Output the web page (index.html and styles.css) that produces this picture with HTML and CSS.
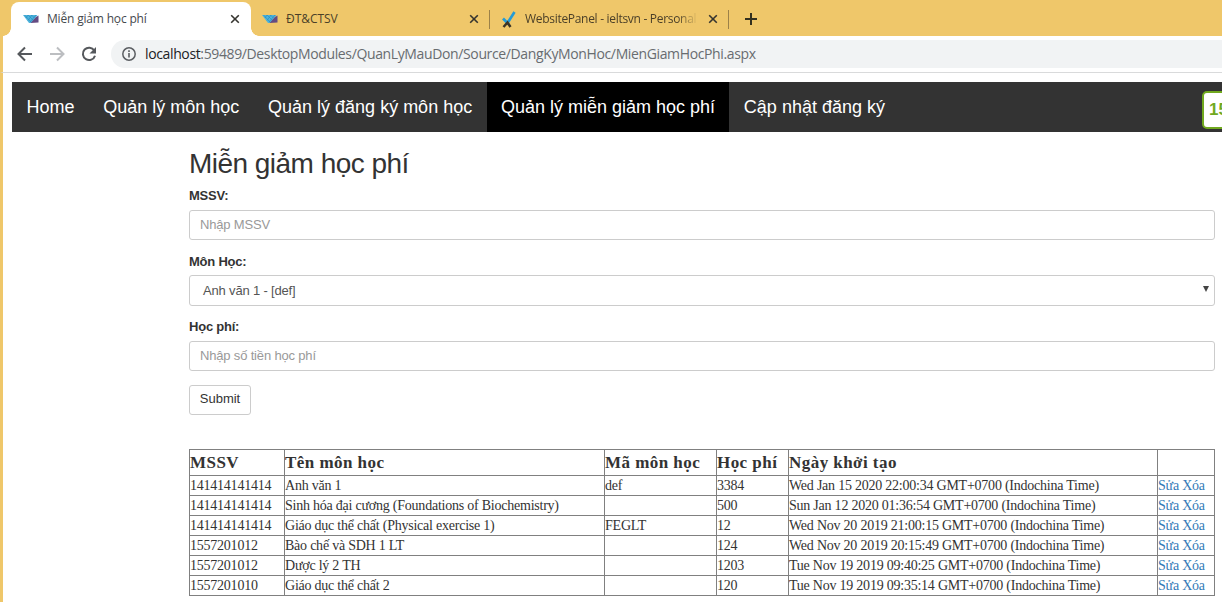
FILE: index.html
```html
<!DOCTYPE html>
<html lang="vi">
<head>
<meta charset="utf-8">
<title>Miễn giảm học phí</title>
<link rel="stylesheet" href="styles.css">
</head>
<body>
<svg class="defs" width="0" height="0">
  <defs>
    <symbol id="logo" viewBox="0 0 16 10"><path d="M0 1h14.500L8.500 9H6z" fill="#4fb4dc"/><path d="m1.500 1 6.500 7M5 1l5 5M8.500 1l3 3M5 1 3 4M9 1 5 6.500M13 1 7 8" fill="none" stroke="#2389bd" stroke-width=".6"/><path d="M7.500 9 13 3l2.500-1.500V8.500z" fill="#654b82"/></symbol>
    <symbol id="close" viewBox="0 0 10 10"><path d="m1.200 1.200 7.600 7.600M8.800 1.200 1.200 8.800" fill="none" stroke="currentColor" stroke-width="1.600"/></symbol>
  </defs>
</svg>
<div class="browser">
  <div class="tabs">
    <div class="tab active"><svg class="fav"><use href="#logo"/></svg><span class="title t1">Miễn giảm học phí</span><svg class="close"><use href="#close"/></svg></div>
    <div class="tab"><svg class="fav"><use href="#logo"/></svg><span class="title t2">ĐT&amp;CTSV</span><svg class="close"><use href="#close"/></svg></div>
    <div class="tab"><svg class="fav check" viewBox="0 0 16 18"><path d="M2 8.500 6.500 13 13.500 2" fill="none" stroke="#249bd7" stroke-width="2.700"/><path d="m2.500 17 4-4.500L9.500 17" fill="none" stroke="#3d3426" stroke-width="2.500"/></svg><span class="title t3">WebsitePanel - ieltsvn - Personal</span><svg class="close"><use href="#close"/></svg></div>
    <svg class="plus" viewBox="0 0 12 12"><path d="M6 0v12M0 6h12" stroke="#33301f" stroke-width="2"/></svg>
  </div>
  <div class="toolbar">
    <svg class="nav-icon" viewBox="0 0 16 16"><path d="M15 8H2M8 1.500 1.500 8 8 14.500" fill="none" stroke="#55585c" stroke-width="2"/></svg>
    <svg class="nav-icon" viewBox="0 0 16 16"><path d="M1 8h13M8 1.500 14.500 8 8 14.500" fill="none" stroke="#bcbec1" stroke-width="2"/></svg>
    <svg class="nav-icon" viewBox="0 0 16 16"><path d="M13.300 4.500A6.200 6.200 0 1 0 14 9.700" fill="none" stroke="#55585c" stroke-width="2"/><path d="M15 1v6.500H8.500z" fill="#55585c"/></svg>
    <div class="address">
      <svg class="info" viewBox="0 0 14 14"><circle cx="7" cy="7" r="6.200" fill="none" stroke="#5b5e62" stroke-width="1.500"/><path d="M7 6v4.500M7 3.300V5" stroke="#5b5e62" stroke-width="1.600"/></svg>
      <span class="url"><b>localhost</b>:59489/DesktopModules/QuanLyMauDon/Source/DangKyMonHoc/MienGiamHocPhi.aspx</span>
    </div>
  </div>
  <div class="page">
    <nav class="menu">
      <a>Home</a><a>Quản lý môn học</a><a>Quản lý đăng ký môn học</a><a class="current">Quản lý miễn giảm học phí</a><a>Cập nhật đăng ký</a>
      <div class="badge">15</div>
    </nav>
    <main class="content">
      <h2>Miễn giảm học phí</h2>
      <label>MSSV:</label>
      <div class="field"><span class="hint">Nhập MSSV</span></div>
      <label class="subject">Môn Học:</label>
      <div class="field select"><span>Anh văn 1 - [def]</span><svg class="arrow" viewBox="0 0 6 6"><path d="M0 0h6L3 6z" fill="#444"/></svg></div>
      <label>Học phí:</label>
      <div class="field"><span class="hint">Nhập số tiền học phí</span></div>
      <button type="button">Submit</button>
      <table>
        <colgroup><col class="c1"><col class="c2"><col class="c3"><col class="c4"><col class="c5"><col class="c6"></colgroup>
        <thead><tr><th>MSSV</th><th>Tên môn học</th><th>Mã môn học</th><th>Học phí</th><th>Ngày khởi tạo</th><th></th></tr></thead>
        <tbody>
        <tr><td>141414141414</td><td>Anh văn 1</td><td>def</td><td>3384</td><td>Wed Jan 15 2020 22:00:34 GMT+0700 (Indochina Time)</td><td><a>Sửa</a> <a>Xóa</a></td></tr>
        <tr><td>141414141414</td><td>Sinh hóa đại cương (Foundations of Biochemistry)</td><td></td><td>500</td><td>Sun Jan 12 2020 01:36:54 GMT+0700 (Indochina Time)</td><td><a>Sửa</a> <a>Xóa</a></td></tr>
        <tr><td>141414141414</td><td>Giáo dục thể chất (Physical exercise 1)</td><td>FEGLT</td><td>12</td><td>Wed Nov 20 2019 21:00:15 GMT+0700 (Indochina Time)</td><td><a>Sửa</a> <a>Xóa</a></td></tr>
        <tr><td>1557201012</td><td>Bào chế và SDH 1 LT</td><td></td><td>124</td><td>Wed Nov 20 2019 20:15:49 GMT+0700 (Indochina Time)</td><td><a>Sửa</a> <a>Xóa</a></td></tr>
        <tr><td>1557201012</td><td>Dược lý 2 TH</td><td></td><td>1203</td><td>Tue Nov 19 2019 09:40:25 GMT+0700 (Indochina Time)</td><td><a>Sửa</a> <a>Xóa</a></td></tr>
        <tr><td>1557201010</td><td>Giáo dục thể chất 2</td><td></td><td>120</td><td>Tue Nov 19 2019 09:35:14 GMT+0700 (Indochina Time)</td><td><a>Sửa</a> <a>Xóa</a></td></tr>
        </tbody>
      </table>
    </main>
  </div>
</div>
</body>
</html>
```
FILE: styles.css
```css
* { box-sizing: border-box; }
body { margin: 0; width: 1222px; height: 602px; overflow: hidden; background: #fff; color: #333; font-family: "Liberation Sans", Arial, sans-serif; }
.defs { position: absolute; }
svg { display: block; flex: none; }
.browser { height: 602px; overflow: hidden; }
.tabs { height: 36px; padding-left: 11px; background: #efc76a; display: flex; align-items: flex-end; }
.tab { width: 239px; height: 34px; padding: 0 11px 0 11px; display: flex; align-items: center; position: relative; color: #4a3f28; }
.tab + .tab::after { content: ""; position: absolute; right: 0; top: 8px; width: 1px; height: 19px; background: #9c8148; }
.tab.active { width: 240px; padding-left: 12px; background: #fff; border-radius: 8px 8px 0 0; color: #45494d; }
.tab.active::before, .tab.active::after { content: ""; position: absolute; bottom: 0; width: 8px; height: 8px; }
.tab.active::before { left: -8px; background: radial-gradient(circle at 0 0, #efc76a 7.5px, #fff 8px); }
.tab.active::after { right: -8px; background: radial-gradient(circle at 100% 0, #efc76a 7.5px, #fff 8px); }
.fav { width: 16px; height: 10px; margin-right: 8px; }
.fav.check { height: 18px; }
.title { flex: 1; min-width: 0; overflow: hidden; white-space: nowrap; font: 12px/18px "Open Sans", sans-serif; letter-spacing: -0.18px; }
.t2 { letter-spacing: -0.05px; }
.t3 { letter-spacing: -0.3px; margin-right: 10px; -webkit-mask-image: linear-gradient(to right, #000 88%, transparent); mask-image: linear-gradient(to right, #000 88%, transparent); }
.close { width: 10px; height: 10px; color: #35342f; }
.plus { width: 12px; height: 12px; margin: 0 0 11px 16px; }
.toolbar { height: 37px; padding: 4px 0 4px 14px; display: flex; border-left: 3px solid #efc76a; border-bottom: 1px solid #d9dadb; }
.nav-icon { width: 16px; height: 16px; margin: 6px 16px 0 0; }
.address { flex: 1; height: 28px; margin-left: -2px; padding-left: 11px; display: flex; align-items: center; border-radius: 14px 0 0 14px; background: #f1f3f4; }
.info { width: 14px; height: 14px; margin-right: 9px; }
.url { font: 14px/20px "Open Sans", sans-serif; letter-spacing: -0.37px; color: #686c70; white-space: nowrap; }
.url b { font-weight: 400; color: #202124; }
.page { height: 529px; padding: 9px 0 0 9px; border-left: 3px solid #efc76a; }
.menu { height: 50px; background: #333; display: flex; position: relative; overflow: hidden; }
.menu a { padding: 0 14.4px; font-size: 18px; line-height: 50px; color: #fff; white-space: nowrap; }
.menu .current { background: #000; }
.badge { position: absolute; left: 1190px; top: 9px; width: 40px; height: 38px; border: 2px solid #71a91f; border-radius: 5px; background: #fff; padding-left: 5px; font: bold 17px/34px "Liberation Sans", sans-serif; color: #71a91f; }
.content { width: 1026px; margin-left: 177px; display: flex; flex-direction: column; align-items: flex-start; }
h2 { margin: 15px 0 0; height: 39px; font-size: 28px; line-height: 34px; font-weight: 400; letter-spacing: -0.53px; white-space: nowrap; }
label { height: 24px; font-size: 13px; line-height: 20px; font-weight: 700; letter-spacing: -0.22px; }
.subject { margin-top: 1px; height: 23px; }
.field { width: 1026px; height: 30px; margin-bottom: 11px; padding-left: 10px; border: 1px solid #ccc; border-radius: 3px; display: flex; align-items: center; font-size: 13px; line-height: 18px; letter-spacing: -0.17px; color: #555; }
.field.select { height: 31px; padding: 0 6px 0 13px; justify-content: space-between; }
.arrow { width: 6px; height: 6px; margin: 0 -1px 3px 0; }
.hint { color: #999; }
button { width: 62px; height: 30px; margin-top: 3px; padding: 0 0 2px; border: 1px solid #ccc; border-radius: 3px; background: #fff; color: #333; font: 13px/18px "Liberation Sans", sans-serif; }
table { width: 1026px; margin-top: 34px; border-collapse: collapse; table-layout: fixed; font-family: "Liberation Serif", "Times New Roman", serif; }
.c1 { width: 95px; } .c2 { width: 320px; } .c3 { width: 112px; } .c4 { width: 72px; } .c5 { width: 369px; } .c6 { width: 57px; }
th, td { padding: 0; border: 1px solid #808080; text-align: left; white-space: nowrap; }
th { height: 26px; font-size: 17px; line-height: 24px; letter-spacing: 0.45px; }
td { height: 20px; font-size: 14px; line-height: 19px; letter-spacing: -0.23px; }
td a { color: #337ab7; }
```
